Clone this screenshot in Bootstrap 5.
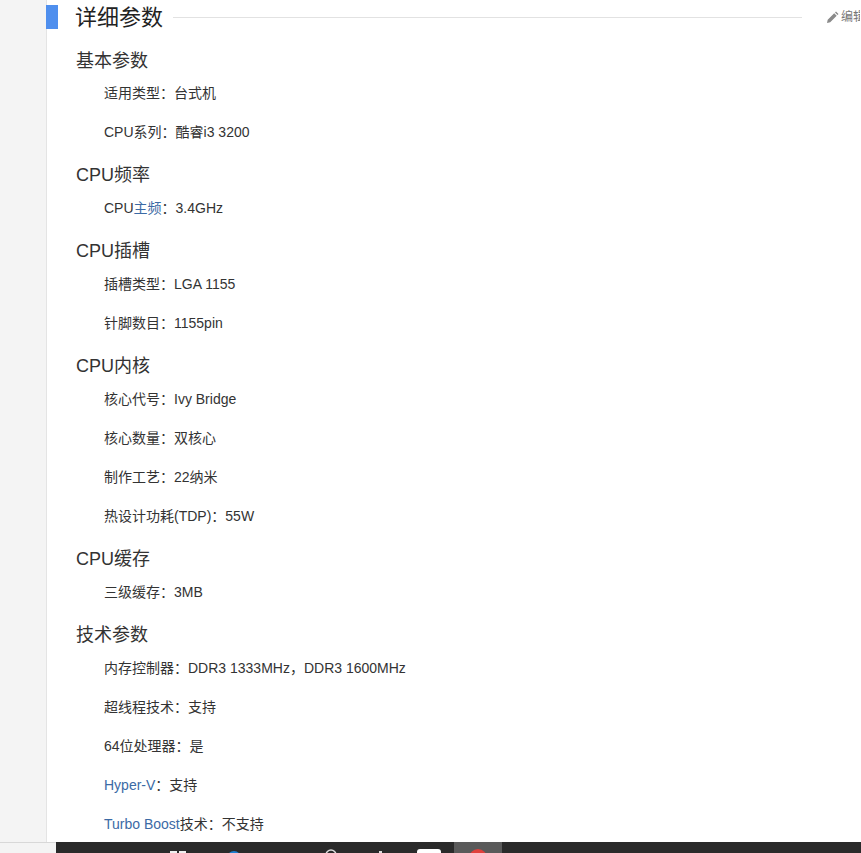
<!doctype html>
<html lang="zh"><head><meta charset="utf-8">
<link href="https://cdn.jsdelivr.net/npm/bootstrap@5.3.0/dist/css/bootstrap.min.css" rel="stylesheet">
<style>
html,body{height:853px;overflow:hidden;background:#fff}
body{font-family:Arial,"Liberation Sans","Noto Sans CJK SC",sans-serif;color:#333;font-size:14px}
.pg-frame{height:842px}
.pg-side{width:47px;background:#f4f4f4;border-right:1px solid #e4e4e4}
.pg-main{padding-left:29px;position:relative;min-width:0}
.pg-mark{position:absolute;left:-1px;top:5px;width:12px;height:24px;background:#4f8fee}
.pg-h2{font-size:22px;font-weight:400;line-height:30px;color:#222;margin:3px 0 0 -1px;height:30px}
.pg-rule{height:1px;background:#e2e2e2;margin:1px 0 0 10px;width:629px}
.pg-edit{font-size:12px;color:#777;margin:1px 0 0 24px;white-space:nowrap;width:34px;overflow:hidden;flex:none}
.pg-h3{font-size:18px;font-weight:400;line-height:28px;color:#333;margin:0 0 8px;height:28px}
.pg-h3.first{margin-top:14px;margin-bottom:7px}
.pg-h3.nxt{margin-top:18px}
.pg-item{line-height:22px;height:22px;margin:0 0 17px 28px;white-space:nowrap;font-size:14px}
.pg-item.lst{margin-bottom:0}
.pg-item a{color:#3b6aa5;text-decoration:none}
.pg-foot{height:11px}
.pg-footl{width:56px;background:#f4f4f4;border-top:1px solid #d8d8d8}
.pg-task{background:#2a2a2a;overflow:hidden}
.pg-task svg{display:block}
</style></head><body>
<div class="d-flex pg-frame">
 <div class="pg-side flex-shrink-0"></div>
 <div class="pg-main flex-grow-1">
  <div class="pg-mark"></div>
  <div class="d-flex align-items-center">
   <h2 class="pg-h2">详细参数</h2><div class="pg-rule"></div>
   <div class="pg-edit d-flex align-items-center"><svg width="13" height="13" viewBox="0 0 13 13" class="flex-shrink-0" style="margin-right:2px"><path d="M1 12l.7-3.2 6.5-6.5 2.5 2.5-6.5 6.5zM9 1.5l1-1 2.5 2.5-1 1z" fill="#8a8a8a"/></svg><span>编辑</span></div>
  </div>
  <h3 class="pg-h3 first">基本参数</h3>
  <div class="pg-item">适用类型：台式机</div>
  <div class="pg-item lst">CPU系列：酷睿i3 3200</div>
  <h3 class="pg-h3 nxt">CPU频率</h3>
  <div class="pg-item lst">CPU<a href="#">主频</a>：3.4GHz</div>
  <h3 class="pg-h3 nxt">CPU插槽</h3>
  <div class="pg-item">插槽类型：LGA 1155</div>
  <div class="pg-item lst">针脚数目：1155pin</div>
  <h3 class="pg-h3 nxt">CPU内核</h3>
  <div class="pg-item">核心代号：Ivy Bridge</div>
  <div class="pg-item">核心数量：双核心</div>
  <div class="pg-item">制作工艺：22纳米</div>
  <div class="pg-item lst">热设计功耗(TDP)：55W</div>
  <h3 class="pg-h3 nxt">CPU缓存</h3>
  <div class="pg-item lst">三级缓存：3MB</div>
  <h3 class="pg-h3 nxt">技术参数</h3>
  <div class="pg-item">内存控制器：DDR3 1333MHz，DDR3 1600MHz</div>
  <div class="pg-item">超线程技术：支持</div>
  <div class="pg-item">64位处理器：是</div>
  <div class="pg-item"><a href="#">Hyper-V</a>：支持</div>
  <div class="pg-item lst"><a href="#">Turbo Boost</a>技术：不支持</div>
 </div>
</div>
<div class="d-flex pg-foot">
 <div class="pg-footl flex-shrink-0"></div>
 <div class="pg-task flex-grow-1"><svg width="805" height="11" viewBox="0 0 805 11">
  <rect x="398" y="0" width="48" height="11" fill="#5a5a5a"/>
  <rect x="114" y="9" width="7" height="2" fill="#eee"/><rect x="123" y="9" width="7" height="2" fill="#eee"/>
  <circle cx="178" cy="16" r="7" fill="#1f7fd0"/>
  <circle cx="275" cy="13" r="5" fill="none" stroke="#ddd" stroke-width="1.5"/>
  <rect x="323" y="9" width="3" height="2" fill="#ddd"/>
  <rect x="361" y="7" width="24" height="10" rx="3" fill="#fff"/>
  <circle cx="422" cy="16" r="9" fill="#e0403c"/>
 </svg></div>
</div>
<script src="https://cdn.jsdelivr.net/npm/bootstrap@5.3.0/dist/js/bootstrap.bundle.min.js"></script>
</body></html>
